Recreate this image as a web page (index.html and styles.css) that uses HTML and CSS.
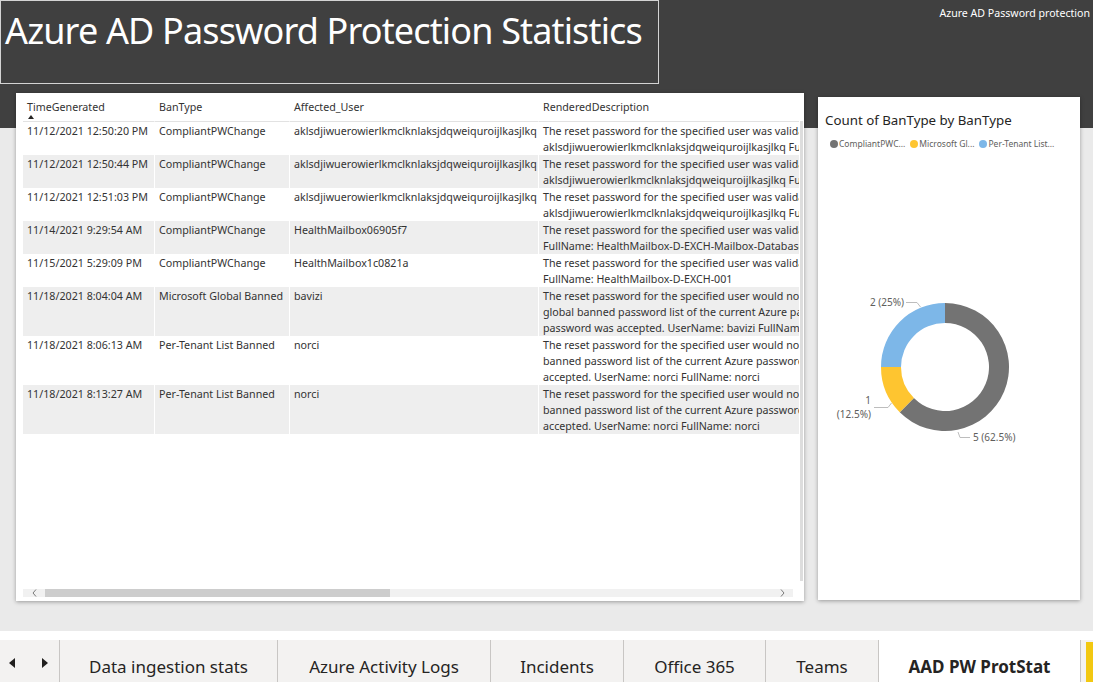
FILE: index.html
```html
<!DOCTYPE html>
<html lang="en">
<head>
<meta charset="utf-8">
<title>Azure AD Password Protection Statistics</title>
<link rel="stylesheet" href="styles.css">
</head>
<body>
<div class="canvas">
  <div class="head">
    <div class="title-box"><h1 class="title">Azure AD Password Protection Statistics</h1></div>
    <div class="report-name">Azure AD Password protection</div>
  </div>
  <div class="visuals">
    <div class="table-card">
      <div class="table-view">
        <table class="grid">
          <colgroup>
            <col class="c1"><col class="c2"><col class="c3"><col class="c4">
          </colgroup>
          <thead>
            <tr>
              <th>TimeGenerated<span class="sort"></span></th>
              <th>BanType</th>
              <th>Affected_User</th>
              <th>RenderedDescription</th>
            </tr>
          </thead>
          <tbody>
            <tr>
              <td>11/12/2021 12:50:20 PM</td>
              <td>CompliantPWChange</td>
              <td>aklsdjiwuerowierlkmclknlaksjdqweiquroijlkasjlkq</td>
              <td><div>The reset password for the specified user was validated as compliant with the current Azure password policy. UserName:</div><div>aklsdjiwuerowierlkmclknlaksjdqweiquroijlkasjlkq FullName: aklsdjiwuerowierlkmclknlaksjdqweiquroijlkasjlkq</div></td>
            </tr>
            <tr>
              <td>11/12/2021 12:50:44 PM</td>
              <td>CompliantPWChange</td>
              <td>aklsdjiwuerowierlkmclknlaksjdqweiquroijlkasjlkq</td>
              <td><div>The reset password for the specified user was validated as compliant with the current Azure password policy. UserName:</div><div>aklsdjiwuerowierlkmclknlaksjdqweiquroijlkasjlkq FullName: aklsdjiwuerowierlkmclknlaksjdqweiquroijlkasjlkq</div></td>
            </tr>
            <tr>
              <td>11/12/2021 12:51:03 PM</td>
              <td>CompliantPWChange</td>
              <td>aklsdjiwuerowierlkmclknlaksjdqweiquroijlkasjlkq</td>
              <td><div>The reset password for the specified user was validated as compliant with the current Azure password policy. UserName:</div><div>aklsdjiwuerowierlkmclknlaksjdqweiquroijlkasjlkq FullName: aklsdjiwuerowierlkmclknlaksjdqweiquroijlkasjlkq</div></td>
            </tr>
            <tr>
              <td>11/14/2021 9:29:54 AM</td>
              <td>CompliantPWChange</td>
              <td>HealthMailbox06905f7</td>
              <td><div>The reset password for the specified user was validated as compliant with the current Azure password policy. UserName: HealthMailbox06905f7</div><div>FullName: HealthMailbox-D-EXCH-Mailbox-Database-1084577185</div></td>
            </tr>
            <tr>
              <td>11/15/2021 5:29:09 PM</td>
              <td>CompliantPWChange</td>
              <td>HealthMailbox1c0821a</td>
              <td><div>The reset password for the specified user was validated as compliant with the current Azure password policy. UserName: HealthMailbox1c0821a</div><div>FullName: HealthMailbox-D-EXCH-001</div></td>
            </tr>
            <tr>
              <td>11/18/2021 8:04:04 AM</td>
              <td>Microsoft Global Banned</td>
              <td>bavizi</td>
              <td><div>The reset password for the specified user would normally have been rejected because it matches at least one of the tokens present in the Microsoft</div><div>global banned password list of the current Azure password policy for this user. The policy is configured in audit-only mode so the</div><div>password was accepted. UserName: bavizi FullName: bavizi</div></td>
            </tr>
            <tr>
              <td>11/18/2021 8:06:13 AM</td>
              <td>Per-Tenant List Banned</td>
              <td>norci</td>
              <td><div>The reset password for the specified user would normally have been rejected because it matches at least one of the tokens present in the per-tenant</div><div>banned password list of the current Azure password policy for this user. The policy is configured in audit-only mode so the password was</div><div>accepted. UserName: norci FullName: norci</div></td>
            </tr>
            <tr>
              <td>11/18/2021 8:13:27 AM</td>
              <td>Per-Tenant List Banned</td>
              <td>norci</td>
              <td><div>The reset password for the specified user would normally have been rejected because it matches at least one of the tokens present in the per-tenant</div><div>banned password list of the current Azure password policy for this user. The policy is configured in audit-only mode so the password was</div><div>accepted. UserName: norci FullName: norci</div></td>
            </tr>
          </tbody>
        </table>
      </div>
      <div class="hscroll">
        <span class="arrow"><svg width="5" height="8" viewBox="0 0 5 8"><path d="M4 0.5 L1 4 L4 7.5" fill="none" stroke="#7a7a7a" stroke-width="1"/></svg></span>
        <span class="thumb"></span>
        <span class="track-rest"></span>
        <span class="arrow"><svg width="5" height="8" viewBox="0 0 5 8"><path d="M1 0.5 L4 4 L1 7.5" fill="none" stroke="#7a7a7a" stroke-width="1"/></svg></span>
      </div>
      <div class="vscroll"></div>
    </div>

    <div class="chart-card">
      <div class="chart-title">Count of BanType by BanType</div>
      <div class="legend">
        <span class="item"><i class="dot gray"></i><span class="ltext">CompliantPWC...</span></span>
        <span class="item"><i class="dot yellow"></i><span class="ltext">Microsoft Gl...</span></span>
        <span class="item"><i class="dot blue"></i><span class="ltext">Per-Tenant List...</span></span>
      </div>
      <svg class="donut" width="262" height="450" viewBox="0 0 262 450">
        <path d="M127 153 A64 64 0 1 1 81.75 262.25 L95.89 248.11 A44 44 0 1 0 127 173 Z" fill="#737373"/>
        <path d="M81.75 262.25 A64 64 0 0 1 63 217 L83 217 A44 44 0 0 0 95.89 248.11 Z" fill="#fec530"/>
        <path d="M63 217 A64 64 0 0 1 127 153 L127 173 A44 44 0 0 0 83 217 Z" fill="#7db7e8"/>
        <g fill="none" stroke="#bdbdbd" stroke-width="1">
          <path d="M88 152.5 H99 L102.5 157"/>
          <path d="M56 257.5 H70 L73.5 253"/>
          <path d="M140 282 L142 287.5 H152"/>
        </g>
        <g class="lbl">
          <text x="86" y="155.5" text-anchor="end">2 (25%)</text>
          <text x="53" y="253.5" text-anchor="end">1</text>
          <text x="53" y="268" text-anchor="end">(12.5%)</text>
          <text x="155" y="291">5 (62.5%)</text>
        </g>
      </svg>
    </div>
  </div>
</div>

<div class="tabbar">
  <div class="nav">
    <svg width="6" height="10" viewBox="0 0 6 10"><path d="M6 0 L0 5 L6 10 Z" fill="#201f1e"/></svg>
    <svg width="6" height="10" viewBox="0 0 6 10"><path d="M0 0 L6 5 L0 10 Z" fill="#201f1e"/></svg>
  </div>
  <div class="tab t1">Data ingestion stats</div>
  <div class="tab t2">Azure Activity Logs</div>
  <div class="tab t3">Incidents</div>
  <div class="tab t4">Office 365</div>
  <div class="tab t5">Teams</div>
  <div class="tab t6 active">AAD PW ProtStat</div>
  <div class="add"></div>
</div>
</body>
</html>
```

FILE: styles.css
```css
html, body {
  margin: 0;
  padding: 0;
}
body {
  width: 1093px;
  height: 682px;
  overflow: hidden;
  background: #ffffff;
  font-family: "Noto Sans", "Open Sans", sans-serif;
  color: #252423;
}

.canvas {
  height: 631px;
  background: linear-gradient(#404040 0, #404040 128px, #eaeaea 128px);
}

.head {
  display: flex;
  align-items: flex-start;
}
.title-box {
  box-sizing: border-box;
  width: 659px;
  height: 84px;
  border: 1px solid #d4d4d4;
}
.title {
  margin: 6px 0 0 4px;
  font-size: 36px;
  line-height: 48px;
  font-weight: 400;
  letter-spacing: -0.85px;
  color: #ffffff;
  white-space: nowrap;
}
.report-name {
  margin-left: auto;
  padding: 5px 3px 0 0;
  font-size: 10.6px;
  line-height: 16px;
  color: #ffffff;
  white-space: nowrap;
}

.visuals {
  display: flex;
  align-items: flex-start;
  margin-top: 9px;
}

/* table visual */
.table-card {
  position: relative;
  box-sizing: border-box;
  margin-left: 16px;
  width: 788px;
  height: 508px;
  padding: 4px 0 0 7px;
  background: #ffffff;
  box-shadow: 0 1px 4px rgba(0, 0, 0, 0.35);
  display: flex;
  flex-direction: column;
}
.table-view {
  flex: 1;
  width: 776px;
  overflow: hidden;
}
.grid {
  table-layout: fixed;
  border-collapse: separate;
  border-spacing: 0;
  width: 1175px;
  font-size: 10.7px;
  line-height: 16px;
  color: #333333;
}
.c1 { width: 131px; }
.c2 { width: 135px; }
.c3 { width: 249px; }
.c4 { width: 660px; }

.grid th {
  font-weight: 400;
  text-align: left;
  vertical-align: top;
  height: 22px;
  padding: 2px 4px 0 4px;
  border-bottom: 1px solid #e2e2e2;
  white-space: nowrap;
}
.grid th + th { border-left: 1px solid transparent; }
.sort {
  display: block;
  width: 0;
  height: 0;
  margin: 0 0 0 1px;
  border-left: 3px solid transparent;
  border-right: 3px solid transparent;
  border-bottom: 4px solid #252423;
}
.grid td {
  vertical-align: top;
  padding: 1px 4px 0 4px;
  white-space: nowrap;
  overflow: hidden;
}
.grid td + td { border-left: 1px solid #ffffff; }
.grid tbody tr:nth-child(even) td { background: #eeeeee; }

.hscroll {
  display: flex;
  align-items: center;
  width: 770px;
  height: 8px;
  margin-bottom: 4px;
  background: #f1f1f1;
}
.hscroll .arrow {
  width: 22px;
  height: 8px;
  display: flex;
  align-items: center;
  justify-content: center;
}
.hscroll .thumb {
  width: 345px;
  height: 8px;
  background: #cdcdcd;
}
.hscroll .track-rest { flex: 1; }

.vscroll {
  position: absolute;
  right: 1px;
  top: 28px;
  bottom: 20px;
  width: 3px;
  background: #dddddd;
}

/* donut visual */
.chart-card {
  box-sizing: border-box;
  margin: 4px 0 0 14px;
  width: 262px;
  height: 503px;
  padding-top: 14px;
  background: #ffffff;
  box-shadow: 0 1px 4px rgba(0, 0, 0, 0.35);
}
.chart-title {
  padding-left: 7px;
  font-size: 13.3px;
  line-height: 18px;
  color: #252423;
  white-space: nowrap;
}
.legend {
  display: flex;
  gap: 5px;
  margin-top: 9px;
  padding-left: 12px;
  font-size: 8.5px;
  line-height: 12px;
  color: #605e5c;
  white-space: nowrap;
}
.legend .item {
  display: flex;
  align-items: center;
  gap: 1px;
}
.dot {
  flex: none;
  display: block;
  width: 8px;
  height: 8px;
  border-radius: 50%;
}
.dot.gray { background: #737373; }
.dot.yellow { background: #fec530; }
.dot.blue { background: #7db7e8; }
.donut { display: block; }
.lbl text {
  font-family: "Noto Sans", "Open Sans", sans-serif;
  font-size: 10px;
  fill: #605e5c;
}

/* page tabs */
.tabbar {
  display: flex;
  height: 42px;
  margin-top: 9px;
  background: #f3f2f1;
}
.nav {
  box-sizing: border-box;
  width: 60px;
  border-right: 1px solid #c8c6c4;
  display: flex;
  align-items: center;
  gap: 27px;
  padding: 4px 0 0 9px;
}
.tab {
  box-sizing: border-box;
  border-right: 1px solid #c8c6c4;
  padding-top: 15px;
  font-size: 17px;
  line-height: 23px;
  text-align: center;
  color: #252423;
  white-space: nowrap;
}
.t1 { width: 218px; }
.t2 { width: 213px; }
.t3 { width: 133px; }
.t4 { width: 142px; }
.t5 { width: 113px; }
.t6 { width: 202px; }
.tab.active {
  background: #ffffff;
  font-weight: 700;
}
.add {
  width: 7px;
  margin: 2px 0 0 5px;
  background: #f2c811;
}
```
